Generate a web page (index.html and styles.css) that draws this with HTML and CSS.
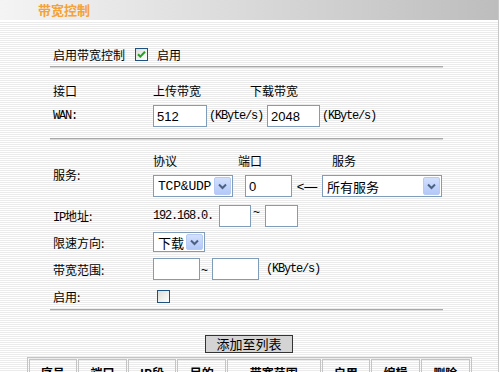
FILE: index.html
```html
<!DOCTYPE html>
<html lang="zh">
<head>
<meta charset="utf-8">
<title>带宽控制</title>
<link rel="stylesheet" href="styles.css">
</head>
<body>
<div class="page">
  <div class="header">带宽控制</div>
  <div class="content">
    <div class="form">
      <div class="row r1">
        <span class="label">启用带宽控制</span>
        <span class="cb checked"><svg width="11" height="11" viewBox="0 0 11 11"><path d="M2 5.2 L4.3 7.6 L9 2.8" fill="none" stroke="#21a121" stroke-width="2"/></svg></span>
        <span class="cbtext">启用</span>
      </div>
      <div class="hr"></div>
      <div class="row r-head">
        <span class="label">接口</span>
        <span class="c-up">上传带宽</span>
        <span>下载带宽</span>
      </div>
      <div class="row r-wan">
        <span class="label mono">WAN:</span>
        <span class="inp w54 num">512</span>
        <span class="unit mono">(KByte/s)</span>
        <span class="inp w53 num">2048</span>
        <span class="unit mono">(KByte/s)</span>
      </div>
      <div class="hr hr2"></div>
      <div class="svc">
        <span class="label svc-label">服务:</span>
        <div class="svc-right">
          <div class="row r-svchead">
            <span class="h-proto">协议</span>
            <span class="h-port">端口</span>
            <span>服务</span>
          </div>
          <div class="row r-svc">
            <div class="sel w80"><span class="val mono13">TCP&amp;UDP</span><span class="dd"><svg width="9" height="7" viewBox="0 0 9 7"><path d="M1 1.5 L4.5 5 L8 1.5" fill="none" stroke="#4d6185" stroke-width="2"/></svg></span></div>
            <span class="inp w47 num">0</span>
            <span class="arrow">&lt;—</span>
            <div class="sel w120"><span class="val">所有服务</span><span class="dd"><svg width="9" height="7" viewBox="0 0 9 7"><path d="M1 1.5 L4.5 5 L8 1.5" fill="none" stroke="#4d6185" stroke-width="2"/></svg></span></div>
          </div>
        </div>
      </div>
      <div class="row r-ip">
        <span class="label"><span class="mono">IP</span>地址:</span>
        <span class="ipfix mono">192.168.0.</span>
        <span class="inp w32"></span>
        <span class="tilde">~</span>
        <span class="inp w33"></span>
      </div>
      <div class="row r-dir">
        <span class="label">限速方向:</span>
        <div class="sel w52 h20"><span class="val">下载</span><span class="dd"><svg width="9" height="7" viewBox="0 0 9 7"><path d="M1 1.5 L4.5 5 L8 1.5" fill="none" stroke="#4d6185" stroke-width="2"/></svg></span></div>
      </div>
      <div class="row r-range">
        <span class="label">带宽范围:</span>
        <span class="inp w47"></span>
        <span class="tilde t2">~</span>
        <span class="inp w47"></span>
        <span class="unit mono u2">(KByte/s)</span>
      </div>
      <div class="row r-en">
        <span class="label">启用:</span>
        <span class="cb cb2"></span>
      </div>
      <div class="hr hr3"></div>
    </div>
    <div class="btnrow"><span class="button">添加至列表</span></div>
    <table class="list">
      <tr>
        <th class="c50">序号</th>
        <th class="c50">端口</th>
        <th class="c51">IP段</th>
        <th class="c50">目的</th>
        <th class="c94">带宽范围</th>
        <th class="c50">启用</th>
        <th class="c50">编辑</th>
        <th class="c50">删除</th>
      </tr>
    </table>
  </div>
</div>
</body>
</html>
```
FILE: styles.css
```css
* { box-sizing: border-box; }
html, body { margin: 0; padding: 0; }
body {
  font-family: "Noto Sans CJK SC", "Liberation Sans", sans-serif;
  font-size: 12px;
  color: #000;
  background: #fff;
  width: 499px;
  height: 372px;
  overflow: hidden;
}
.page {
  border-right: 1px solid #c8c8c8;
  width: 499px;
  height: 372px;
}
.header {
  height: 21px;
  line-height: 19px;
  padding-left: 38px;
  font-size: 13px;
  font-weight: bold;
  color: #f5a238;
  background: linear-gradient(to right, #f4f4f4 0%, #dcdcdc 45%, #bdbdbd 100%);
  border-bottom: 1px solid #fff;
}
.content {
  background: repeating-linear-gradient(to bottom, #ffffff 0px, #ffffff 1px, #ebebeb 1px, #ebebeb 2px);
  height: 351px;
  padding-top: 21px;
}
.form {
  margin-left: 50px;
  width: 393px;
}
.row {
  display: flex;
  align-items: center;
  height: 24px;
  padding-left: 3px;
}
.label { width: 100px; flex: none; }
.mono {
  font-family: "Liberation Mono", monospace;
  font-size: 12px;
  letter-spacing: -1.2px;
}
.mono13 {
  font-family: "Liberation Mono", monospace;
  font-size: 12px;
  letter-spacing: -0.2px;
}
.num { font-family: "Liberation Sans", sans-serif; font-size: 13px; }
.r1 .label { width: 82px; }
.cb {
  width: 13px;
  height: 13px;
  border: 1px solid #1c5180;
  background: linear-gradient(135deg, #dcdcd7, #ffffff);
  display: inline-flex;
  align-items: center;
  justify-content: center;
  flex: none;
}
.cbtext { margin-left: 9px; }
.hr {
  height: 2px;
  border-top: 1px solid #a8a8a8;
  border-bottom: 1px solid #dadada;
}
.r-head { margin-top: 10px; }
.c-up { width: 97px; }
.r-wan { height: 28px; }
.inp {
  display: inline-flex;
  align-items: center;
  height: 22px;
  border: 1px solid #7f9db9;
  background: #fff;
  padding-left: 3px;
  flex: none;
}
.w54 { width: 54px; }
.w53 { width: 53px; }
.w47 { width: 47px; }
.w32 { width: 32px; }
.w33 { width: 33px; }
.unit { margin-left: 2px; width: 58px; }
.hr2 { margin-top: 8px; }
.svc { display: flex; align-items: center; margin-top: 8px; padding-left: 3px; }
.svc-right { display: flex; flex-direction: column; }
.svc-right .row { padding-left: 0; }
.r-svc { height: 28px; }
.h-proto { width: 85px; }
.h-port { width: 94px; }
.sel {
  display: flex;
  align-items: center;
  height: 22px;
  border: 1px solid #7f9db9;
  background: #fff;
  padding: 1px;
  flex: none;
}
.sel .val { flex: 1; padding-left: 3px; font-size: 13px; }
.sel .dd {
  width: 17px;
  height: 18px;
  border: 1px solid #b9cbf3;
  border-radius: 2px;
  background: linear-gradient(to bottom, #d3e0fd, #b2c8f8);
  display: flex;
  align-items: center;
  justify-content: center;
}
.h20 { height: 20px; }
.h20 .dd { height: 16px; }
.w80 { width: 80px; margin-right: 12px; }
.w120 { width: 120px; }
.w52 { width: 52px; }
.arrow { width: 30px; text-align: center; font-family: "Liberation Sans", sans-serif; font-size: 13px; }
.r-ip { margin-top: 4px; }
.ipfix { width: 66px; }
.tilde { width: 14px; align-self: flex-start; padding-top: 1px; padding-left: 2px; font-family: "Liberation Sans", sans-serif; }
.t2 { width: 12px; padding-left: 1px; align-self: center; }
.r-dir { margin-top: 2px; }
.r-range { margin-top: 3px; }
.u2 { margin-left: 7px; }
.r-en { margin-top: 3px; }
.cb2 { margin-left: 4px; }
.hr3 { margin-top: 1px; }
.btnrow { text-align: center; margin-top: 24px; height: 18px; }
.button {
  display: inline-block;
  width: 88px;
  height: 18px;
  line-height: 16px;
  border: 1px solid #333;
  background: #d4d4d4;
  font-size: 13px;
  text-align: center;
}
.list {
  margin: 4px auto 0;
  border-collapse: separate;
  border-spacing: 1px;
  border: 1px solid #c4c4c4;
  width: 445px;
}
.list th {
  height: 26px;
  border: 1px solid #c4c4c4;
  font-weight: bold;
  font-size: 12px;
  padding: 0;
}
```
